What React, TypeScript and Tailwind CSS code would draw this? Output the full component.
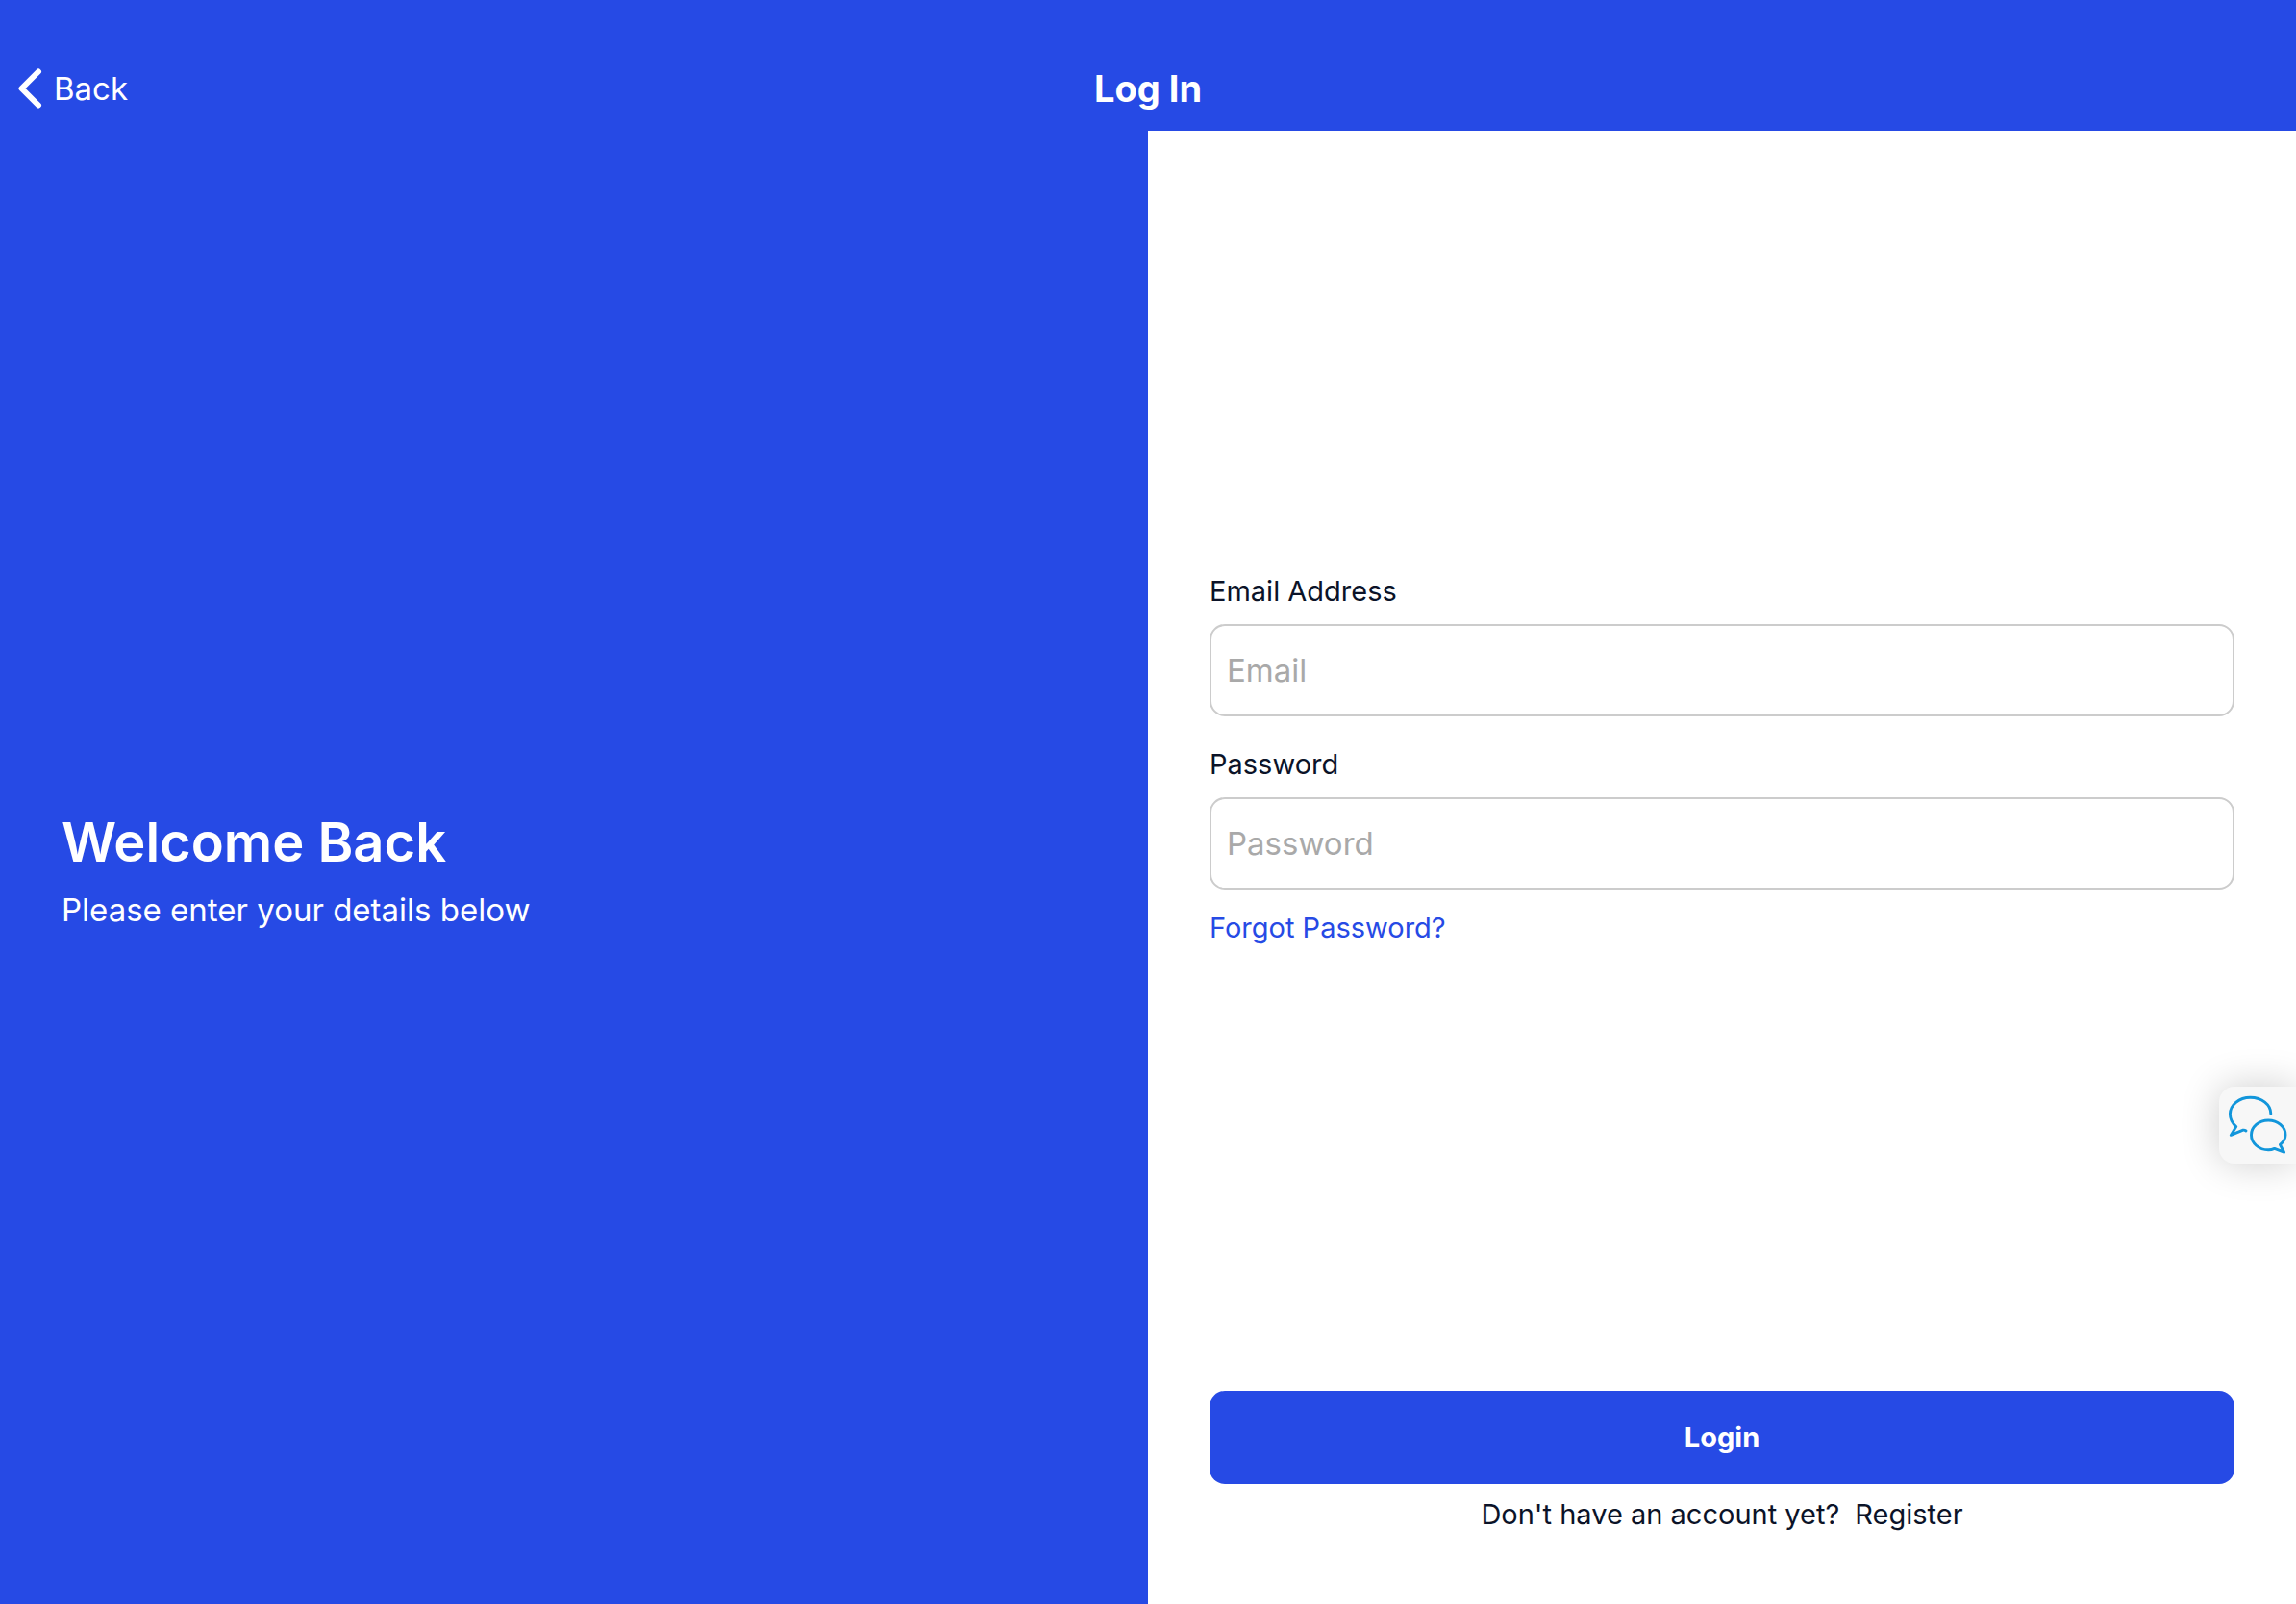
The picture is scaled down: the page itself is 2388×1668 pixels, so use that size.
import { useState } from "react";

type FieldProps = {
  id: string;
  label: string;
  type: string;
  placeholder: string;
  value: string;
  onChange: (value: string) => void;
};

function Field({ id, label, type, placeholder, value, onChange }: FieldProps) {
  return (
    <div className="flex flex-col gap-4">
      <label htmlFor={id} className="text-[29px] leading-9 text-[#0b1328]">
        {label}
      </label>
      <input
        id={id}
        type={type}
        placeholder={placeholder}
        value={value}
        onChange={(e) => onChange(e.target.value)}
        className="h-24 w-full rounded-2xl border-2 border-[#cccccc] bg-white px-4 text-[33px] text-[#0b1328] outline-none placeholder:text-[#a9a9a9]"
      />
    </div>
  );
}

function ChatIcon() {
  return (
    <svg
      viewBox="0 0 80 80"
      className="size-20"
      fill="none"
      stroke="#1296db"
      strokeWidth="2.9"
      strokeLinecap="round"
      strokeLinejoin="round"
      aria-hidden="true"
    >
      <path d="M53.8 28.2C53.8 18.6 44.3 11.3 32.5 11.3C20.8 11.3 11.4 19 11.4 28.6C11.4 33.8 13.8 38.2 17.8 41.6L12.3 50.4L25 45.2Q26.5 44.9 28 46" />
      <path d="M57.6 64.4C55.6 65.3 53.5 65.8 51.2 65.8C41.4 65.8 33.5 58.8 33.5 50.3C33.5 41.8 41.4 35 51.2 35C61 35 69 41.8 69 50.3C69 54.2 67 57.6 63.4 60.4L67.6 68.2Z" />
    </svg>
  );
}

export default function App() {
  const [email, setEmail] = useState("");
  const [password, setPassword] = useState("");

  return (
    <div className="flex min-h-screen flex-col bg-white font-['Inter',sans-serif]">
      <header className="grid h-[136px] grid-cols-3 items-center bg-[#264ae5] pt-12 text-white">
        <button type="button" className="flex items-center gap-3 justify-self-start pl-4 text-[33px] leading-10">
          <svg
            viewBox="0 0 28 44"
            className="h-11 w-7"
            fill="none"
            stroke="currentColor"
            strokeWidth="6"
            strokeLinecap="round"
            strokeLinejoin="round"
            aria-hidden="true"
          >
            <path d="M24 4.5L6.5 22L24 39.5" />
          </svg>
          Back
        </button>
        <h1 className="justify-self-center text-[38px] leading-10 font-bold">Log In</h1>
      </header>

      <main className="grid flex-1 grid-cols-2">
        <section className="flex flex-col justify-center gap-3 bg-[#264ae5] px-16 pt-1 text-white">
          <h2 className="text-[56px] leading-[72px] font-semibold">Welcome Back</h2>
          <p className="text-[33px] leading-11">Please enter your details below</p>
        </section>

        <form className="flex flex-col px-16" onSubmit={(e) => e.preventDefault()}>
          <div className="flex flex-1 flex-col justify-center pb-1">
            <div className="flex flex-col gap-8">
              <Field
                id="email"
                label="Email Address"
                type="email"
                placeholder="Email"
                value={email}
                onChange={setEmail}
              />
              <Field
                id="password"
                label="Password"
                type="password"
                placeholder="Password"
                value={password}
                onChange={setPassword}
              />
            </div>
            <a href="#forgot" className="mt-[22px] self-start text-[29px] leading-9 text-[#264ae5]">
              Forgot Password?
            </a>
          </div>

          <div className="flex flex-col gap-[14px] pb-[75px]">
            <button
              type="submit"
              className="h-24 w-full rounded-2xl bg-[#264ae5] text-[29px] font-bold text-white"
            >
              Login
            </button>
            <p className="flex justify-center gap-4 text-[29px] leading-9 text-[#0b1328]">
              Don't have an account yet?
              <a href="#register">Register</a>
            </p>
          </div>
        </form>
      </main>

      <button
        type="button"
        aria-label="Open chat"
        className="fixed top-[1130px] right-0 size-20 rounded-l-2xl bg-[#f7f7f7] shadow-[0_0_40px_rgba(0,0,0,0.2)]"
      >
        <ChatIcon />
      </button>
    </div>
  );
}
